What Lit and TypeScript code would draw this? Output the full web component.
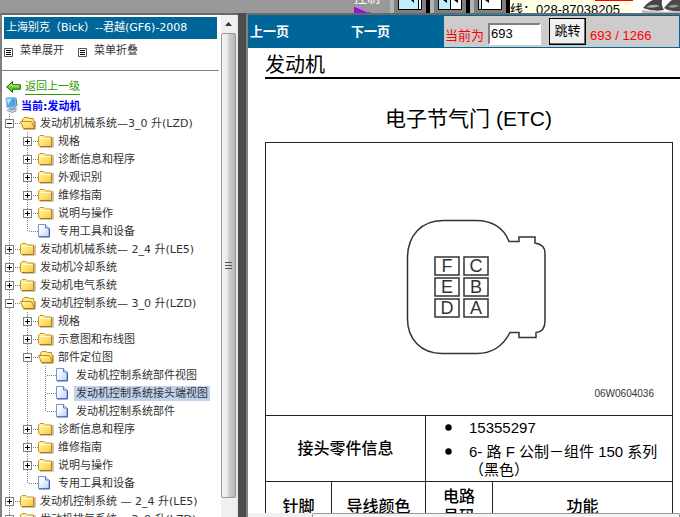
import { LitElement, html, svg, css, nothing, TemplateResult } from "lit";
import { customElement, property, state } from "lit/decorators.js";
import { classMap } from "lit/directives/class-map.js";

interface TreeItem {
  label: string;
  open?: boolean;
  leaf?: boolean;
  selected?: boolean;
  children?: TreeItem[];
}

const TREE: TreeItem[] = [
  {
    label: "发动机机械系统—3_0 升(LZD)",
    open: true,
    children: [
      { label: "规格" },
      { label: "诊断信息和程序" },
      { label: "外观识别" },
      { label: "维修指南" },
      { label: "说明与操作" },
      { label: "专用工具和设备", leaf: true },
    ],
  },
  { label: "发动机机械系统— 2_4 升(LE5)" },
  { label: "发动机冷却系统" },
  { label: "发动机电气系统" },
  {
    label: "发动机控制系统— 3_0 升(LZD)",
    open: true,
    children: [
      { label: "规格" },
      { label: "示意图和布线图" },
      {
        label: "部件定位图",
        open: true,
        children: [
          { label: "发动机控制系统部件视图", leaf: true },
          { label: "发动机控制系统接头端视图", leaf: true, selected: true },
          { label: "发动机控制系统部件", leaf: true },
        ],
      },
      { label: "诊断信息和程序" },
      { label: "维修指南" },
      { label: "说明与操作" },
      { label: "专用工具和设备", leaf: true },
    ],
  },
  { label: "发动机控制系统 — 2_4 升(LE5)" },
  { label: "发动机排气系统— 3_0 升(LZD)" },
  { label: "发动机排气系统— 2_4 升(LE5)" },
];

const gradients = svg`
  <linearGradient id="gold" x1="0" y1="0" x2="1" y2="1">
    <stop offset="0" stop-color="#fff6b4" /><stop offset="0.5" stop-color="#ffe36e" /><stop offset="1" stop-color="#f2c545" />
  </linearGradient>
  <linearGradient id="sheet" x1="0" y1="0" x2="1" y2="1">
    <stop offset="0" stop-color="#ffffff" /><stop offset="0.4" stop-color="#f0f6ff" /><stop offset="1" stop-color="#b4d0fa" />
  </linearGradient>`;

const folderIcon = html`<svg class="icon" viewBox="0 0 18 18" aria-hidden="true">
  <defs>${gradients}</defs>
  <path d="M2 15.5H15.5V5" fill="none" stroke="#c8c8c8" />
  <path d="M.5 13.5V5L2 3.5H6L7.5 5H13.5V14.5H1.5Z" fill="url(#gold)" stroke="#c9962a" />
  <path d="M1.500 6.5H13" stroke="#fffad2" />
  <path d="M14 5.5V14.500H2" fill="none" stroke="#a87510" />
</svg>`;

const openFolderIcon = html`<svg class="icon" viewBox="0 0 18 18" aria-hidden="true">
  <defs>${gradients}</defs>
  <path d="M2.500 13V5L4 3.500H8L9.500 4.500H13.500L14.500 13Z" fill="#ffe98c" stroke="#c08c1a" />
  <path d="M.500 7.500H11.500L14.500 14.500H3.500Z" fill="url(#gold)" stroke="#c08c1a" />
  <path d="M3.500 15H15V7" fill="none" stroke="#a0700c" />
</svg>`;

const pageIcon = html`<svg class="icon" viewBox="0 0 18 18" aria-hidden="true">
  <defs>${gradients}</defs>
  <path d="M.5 2.500H7.500L11 6V14.500H.5Z" fill="url(#sheet)" stroke="#7c93d0" />
  <path d="M7.500 2.500V6H11" fill="#dde9ff" stroke="#5878bd" />
  <path d="M11.500 6.500V15H1" fill="none" stroke="#3e57a5" />
</svg>`;

@customElement("nav-tree")
class NavTree extends LitElement {
  @property({ attribute: false }) items: TreeItem[] = [];

  static styles = css`
    :host { display: block; }
    ul { list-style: none; margin: 0; padding: 0; }
    .nested { display: block; margin-left: 18px; }
    .item {
      background: repeating-linear-gradient(#808080 0 1px, transparent 1px 2px) 7px 0 / 1px 100% no-repeat;
    }
    .item.last { background-size: 1px 10px; }
    .row { display: flex; align-items: center; height: 18px; white-space: nowrap; }
    .cell {
      flex: none; width: 18px; height: 18px; padding-left: 3px; box-sizing: border-box;
      display: flex; align-items: center;
      background: repeating-linear-gradient(90deg, #808080 0 1px, transparent 1px 2px) 9px 9px / 9px 1px no-repeat;
    }
    .toggle {
      width: 9px; height: 9px; padding: 0; border: 1px solid #808080; background: #fff; display: block;
    }
    .toggle svg { display: block; width: 7px; height: 7px; }
    .icon { flex: none; width: 18px; height: 18px; display: block; }
    .label { color: #333; text-decoration: none; line-height: 15px; padding: 0 2px; }
    .label.selected { background: #c1d2ee; }
  `;

  private flip(item: TreeItem) {
    item.open = !item.open;
    this.requestUpdate();
  }

  private renderItem(item: TreeItem, last: boolean): TemplateResult {
    return html`<li class=${classMap({ item: true, last })}>
      <div class="row">
        <span class="cell">
          ${item.leaf
            ? nothing
            : html`<button class="toggle" aria-label=${item.label} aria-expanded=${item.open ? "true" : "false"} @click=${() => this.flip(item)}>
                <svg viewBox="0 0 7 7"><path d=${item.open ? "M1 3.5H6" : "M1 3.5H6M3.5 1V6"} stroke="#000" /></svg>
              </button>`}
        </span>
        ${item.leaf ? pageIcon : item.open ? openFolderIcon : folderIcon}
        <a class=${classMap({ label: true, selected: !!item.selected })} href="#">${item.label}</a>
      </div>
      ${item.open && item.children ? html`<ul class="nested">${this.renderList(item.children)}</ul>` : nothing}
    </li>`;
  }

  private renderList(items: TreeItem[]) {
    return items.map((item, i) => this.renderItem(item, i === items.length - 1));
  }

  render() {
    return html`<ul>${this.renderList(this.items)}</ul>`;
  }
}

@customElement("top-strip")
class TopStrip extends LitElement {
  static styles = css`
    :host {
      display: flex; justify-content: flex-end; height: 13px; overflow: hidden; background: #999; flex: none;
    }
    .tool { width: 36px; height: 13px; flex: none; display: flex; flex-direction: column; justify-content: flex-end; color: #fff; font-size: 13px; line-height: 13px; }
    .tool svg { display: block; flex: none; margin-top: 2px; }
    .button { width: 40px; height: 13px; border: 0; padding: 0; background: #808080; flex: none; }
    .button svg { display: block; }
    .phone {
      flex: none; width: 123px; background: linear-gradient(#f00, #f00) 85px 0 / 38px 1px no-repeat #ffffe8;
      color: #000; font-size: 13px; line-height: 15px; height: 13px; white-space: nowrap; padding-top: 2px; box-sizing: border-box;
    }
    .emblem { flex: none; display: block; background: #fff; }
  `;

  render() {
    const frames = [
      svg`<path d="M8.5-1V9.5H31.5V-1" fill="#bfefff" stroke="#000" /><path d="M28.5 0V9" stroke="#000" /><path d="M29 0H31V9H29Z" fill="#fff" /><path d="M21 0H24V3Z" />`,
      svg`<path d="M8.5-1V9.5H31.5V-1" fill="#bfefff" stroke="#000" /><path d="M20 0H31V9H20Z" fill="#fff" /><path d="M20.5 0V9" stroke="#000" /><path d="M13 0H17V3ZM24 0H28V3Z" />`,
      svg`<path d="M8.5-1V9.5H31.5V-1" fill="#fff" stroke="#000" /><path d="M9 0H11V9H9Z" fill="#bfefff" /><path d="M11.5 0V9" stroke="#000" /><path d="M15 0H19V3Z" />`,
    ];
    return html`
      <div class="tool">
        <span>控制</span>
        <svg width="17" height="7" viewBox="0 0 17 7"><path d="M0 0L17 7H0Z" fill="#8c1bd0" /><path d="M0 0L14 6" stroke="#d08bf5" /></svg>
      </div>
      ${frames.map(
        (f, i) => html`<button class="button" aria-label=${["单页", "双页", "侧栏"][i]}>
          <svg width="40" height="13" viewBox="0 0 40 13"><path d="M0 0H4V13H0Z" fill="#b4b4b4" /><path d="M36 0H40V13H36Z" />${f}</svg>
        </button>`
      )}
      <div class="phone">线：028-87038205</div>
      <svg class="emblem" width="47" height="13" viewBox="0 0 47 13">
        <path d="M10 8Q15 2 20 0H29Q28 5 31 10Q20 12 10 8Z" fill="#444" />
        <path d="M13 7Q19 3 27 6Q20 9 13 7Z" fill="#aaa" />
        <path d="M31 8Q36 2 39 0H47V11Q38 12 31 8Z" fill="#4a4a4a" />
        <path d="M35 7Q40 3 46 6Q41 9 35 7Z" fill="#999" />
        <path d="M9 10Q28 13 47 11V13H9Z" fill="#bbb" />
      </svg>
    `;
  }
}

@customElement("side-panel")
class SidePanel extends LitElement {
  static styles = css`
    :host {
      display: flex; width: 238px; flex: none; box-sizing: border-box; overflow: hidden;
      border-left: 2px solid #808080; border-top: 2px solid #696969; background: #fff;
      font-size: 11px; color: #333;
    }
    .content { flex: 1; min-width: 0; overflow: hidden; }
    .title { margin: 2px 4px 0 2px; padding: 0 2px; height: 22px; line-height: 21px; background: #069; color: #fff; font-size: 11px; font-weight: 400; white-space: nowrap; }
    .actions { display: flex; gap: 14px; height: 32px; margin-right: 2px; padding: 0 2px; box-sizing: border-box; border-bottom: 1px solid #808080; }
    .action { display: flex; align-items: flex-start; gap: 7px; border: 0; padding: 4px 0 0; background: none; font: inherit; color: inherit; line-height: 16px; }
    .action svg { display: block; margin-top: 5px; }
    .back, .current { display: flex; align-items: center; height: 18px; }
    .back { margin-top: 7px; padding-left: 4px; gap: 4px; }
    .back a { color: #390; text-decoration: none; line-height: 14px; border-bottom: 1px solid #390; }
    .current { padding-left: 2px; gap: 2px; color: #00f; font-weight: 700; }
    .scroll { flex: none; width: 15px; background: #f0f0f0; display: flex; flex-direction: column; padding-bottom: 19px; box-sizing: border-box; }
    .arrow { height: 18px; border: 0; padding: 0; background: none; flex: none; }
    .arrow svg { display: block; margin: auto; }
    .thumb {
      flex: 1; border: 1px solid #979797; border-radius: 2px; display: flex; align-items: center; justify-content: center;
      background: linear-gradient(90deg, #f5f5f5, #e9e9eb 45%, #d0d0d4 50%, #b8b8bc);
    }
    .edge { flex: none; width: 2px; background: #e8e8e8; }
  `;

  render() {
    const list = html`<svg width="9" height="9" viewBox="0 0 9 9"><path d="M.5 .5H8.5V8.5H.5Z" fill="#fff" stroke="#555" /><path d="M2 2.5H7M2 4.5H7M2 6.5H7" stroke="#000" /></svg>`;
    return html`
      <div class="content">
        <h1 class="title">上海别克（Bick）--君越(GF6)-2008</h1>
        <div class="actions">
          <button class="action">${list}菜单展开</button>
          <button class="action">${list}菜单折叠</button>
        </div>
        <div class="back">
          <svg width="15" height="12" viewBox="0 0 15 12"><path d="M.7 6L6.5 .7V3.8H14.3V8.2H6.5V11.3Z" fill="#5fd020" stroke="#165b0c" /><path d="M3 5.5L6 3V5H13" fill="none" stroke="#c5f58c" /></svg>
          <a href="#">返回上一级</a>
        </div>
        <div class="current">
          <svg width="15" height="18" viewBox="0 0 15 18">
            <path d="M2 2L11 1.5L12 10L3 11.5Z" fill="#4aa3ee" stroke="#8fb4d8" />
            <path d="M3 3L8 2.5L4 9Z" fill="#b4e2ff" />
            <path d="M12 2L13 10" stroke="#5673a2" />
            <path d="M7 11L12 10.5V15L8 16.5L3 14.5Z" fill="#c5d0df" stroke="#91a2b9" />
            <path d="M6 13.5L11 12.5" stroke="#4e76ad" />
          </svg>
          当前:发动机
        </div>
        <nav-tree .items=${TREE}></nav-tree>
      </div>
      <div class="scroll">
        <button class="arrow" aria-label="向上滚动"><svg width="7" height="4" viewBox="0 0 7 4"><path d="M0 4L3.5 0L7 4Z" fill="#333" /></svg></button>
        <div class="thumb"><svg width="7" height="8" viewBox="0 0 7 8"><path d="M0 .5H7M0 3.5H7M0 6.5H7" stroke="#555" /></svg></div>
      </div>
      <div class="edge"></div>
    `;
  }
}

@customElement("doc-viewer")
class DocViewer extends LitElement {
  @state() private page = "693";

  static styles = css`
    :host {
      flex: 1; min-width: 0; display: flex; flex-direction: column; box-sizing: border-box; overflow: hidden;
      border-left: 2px solid #808080; border-top: 2px solid #696969; background: #fff; color: #000;
    }
    .bar { flex: none; display: flex; height: 33px; background: #069; padding: 1px 1px 1px 0; box-sizing: border-box; }
    .links { flex: none; width: 196px; box-sizing: border-box; display: flex; align-items: center; gap: 62px; padding-left: 2px; }
    .links a { color: #fff; text-decoration: none; font-size: 13px; font-weight: 700; line-height: 18px; }
    .jump { flex: 1; min-width: 0; background: #ccc; display: flex; align-items: center; color: #f00; font-size: 13px; white-space: nowrap; line-height: 16px; padding-left: 1px; }
    .caption { padding-top: 8px; }
    .field {
      width: 53px; height: 22px; margin: 4px 8px 0 4px; padding: 0 1px; box-sizing: border-box;
      border: 2px solid #fff; border-top-color: #808080; border-left-color: #808080; font: inherit; color: #000; background: #fff; border-radius: 0;
    }
    .go {
      width: 37px; height: 27px; padding: 0 0 2px; box-sizing: border-box; border: 1px solid #000; box-shadow: inset -1px -1px #696969;
      background: #f0f0f0; color: #000; font: inherit; border-radius: 0; margin-right: 4px;
    }
    .doc { flex: 1; min-height: 0; overflow: hidden; padding-left: 17px; }
    .chapter { margin: 0; padding: 5px 0 0; height: 31px; box-sizing: border-box; border-bottom: 2px solid #000; font-size: 20px; font-weight: 400; line-height: 24px; }
    .heading { margin: 27px 0 10px; padding-right: 8px; font-size: 21px; font-weight: 400; line-height: 26px; text-align: center; }
    table { width: calc(100% - 7px); border-collapse: collapse; table-layout: fixed; font-size: 16px; }
    td, th { border: 1px solid #222; padding: 0; line-height: 20px; font-weight: 500; text-align: center; }
    .figure { height: 272px; vertical-align: bottom; text-align: right; font-size: 10px; font-weight: 400; color: #333; }
    .figure div { display: flex; flex-direction: column; gap: 32px; }
    .figure svg { display: block; margin: 0 auto; }
    .code { line-height: 14px; padding: 0 18px 14px 0; }
    .info { height: 65px; }
    .parts { text-align: left; font-size: 15px; font-weight: 400; }
    .parts ul { margin: 0; padding: 0 0 0 43px; list-style: none; }
    .parts li { line-height: 18px; margin-bottom: 6px; }
    .parts li:last-child { margin-bottom: 0; }
    .bullet { float: left; width: 8px; height: 18px; margin-left: -24px; display: flex; align-items: center; }
    .bullet svg { display: block; }
    .head { height: 50px; }
    .pin { width: 66px; } .color { width: 94px; } .circuit { width: 67px; }
    .bottom { flex: none; height: 4px; background: #f0f0f0; display: flex; }
    .slider { flex: 1; margin-left: 64px; border: 1px solid #979797; border-bottom: 0; border-radius: 2px 2px 0 0; background: #f4f4f4; }
  `;

  render() {
    const pins = ["F", "C", "E", "B", "D", "A"];
    const dot = html`<span class="bullet"><svg width="7" height="7" viewBox="0 0 7 7"><circle cx="3.5" cy="3.5" r="3.2" /></svg></span>`;
    return html`
      <form class="bar" @submit=${(e: Event) => e.preventDefault()}>
        <nav class="links"><a href="#">上一页</a><a href="#">下一页</a></nav>
        <div class="jump">
          <label class="caption" for="page">当前为</label>
          <input class="field" id="page" type="text" .value=${this.page} @input=${(e: Event) => (this.page = (e.target as HTMLInputElement).value)} />
          <button class="go">跳转</button>
          <span class="caption">693 / 1266</span>
        </div>
      </form>
      <main class="doc">
        <h2 class="chapter">发动机</h2>
        <h3 class="heading">电子节气门 (ETC)</h3>
        <table>
          <colgroup><col class="pin" /><col class="color" /><col class="circuit" /><col /></colgroup>
          <tbody>
            <tr>
              <td class="figure" colspan="4">
                <div>
                  <svg width="154" height="136" viewBox="-14 0 154 136" role="img" aria-label="连接器">
                    <path d="M37 1.5H70C86 1.5 98 9 103 22.5H113V18H129V24C135 25 139 28 139 34V102C139 109 136 113 130 113.5V118.5H113V113.5H104C97 127 86 134.5 71 134.5H36C15 134.5 1.5 120 1.5 100V39C1.5 17 15 1.5 37 1.5Z" fill="none" stroke="#333" stroke-width="1.5" />
                    ${pins.map((p, i) => {
                      const x = 29 + (i % 2) * 29;
                      const y = 38 + Math.floor(i / 2) * 21;
                      return svg`<rect x=${x} y=${y} width="24" height="18" fill="none" stroke="#333" stroke-width="1.5" />
                        <text x=${x + 12} y=${y + 15} text-anchor="middle" font-size="18" fill="#333">${p}</text>`;
                    })}
                  </svg>
                  <span class="code">06W0604036</span>
                </div>
              </td>
            </tr>
            <tr>
              <td class="info" colspan="2">接头零件信息</td>
              <td class="parts" colspan="2">
                <ul>
                  <li>${dot}15355297</li>
                  <li>${dot}6- 路 F 公制－组件 150 系列<br />（黑色）</li>
                </ul>
              </td>
            </tr>
            <tr>
              <th class="head">针脚</th><th>导线颜色</th><th>电路<br />号码</th><th>功能</th>
            </tr>
          </tbody>
        </table>
      </main>
      <div class="bottom"><div class="slider"></div></div>
    `;
  }
}

@customElement("app-root")
class AppRoot extends LitElement {
  static styles = css`
    :host {
      display: flex; flex-direction: column; height: 100vh; overflow: hidden; background: #4d4d4d;
      font-family: "Liberation Sans", "Noto Sans CJK SC", sans-serif;
    }
    .frames { flex: 1; min-height: 0; display: flex; gap: 8px; }
    side-panel { font-family: "DejaVu Sans", "Noto Sans CJK SC", sans-serif; }
  `;

  render() {
    return html`
      <top-strip></top-strip>
      <div class="frames">
        <side-panel></side-panel>
        <doc-viewer></doc-viewer>
      </div>
    `;
  }
}
